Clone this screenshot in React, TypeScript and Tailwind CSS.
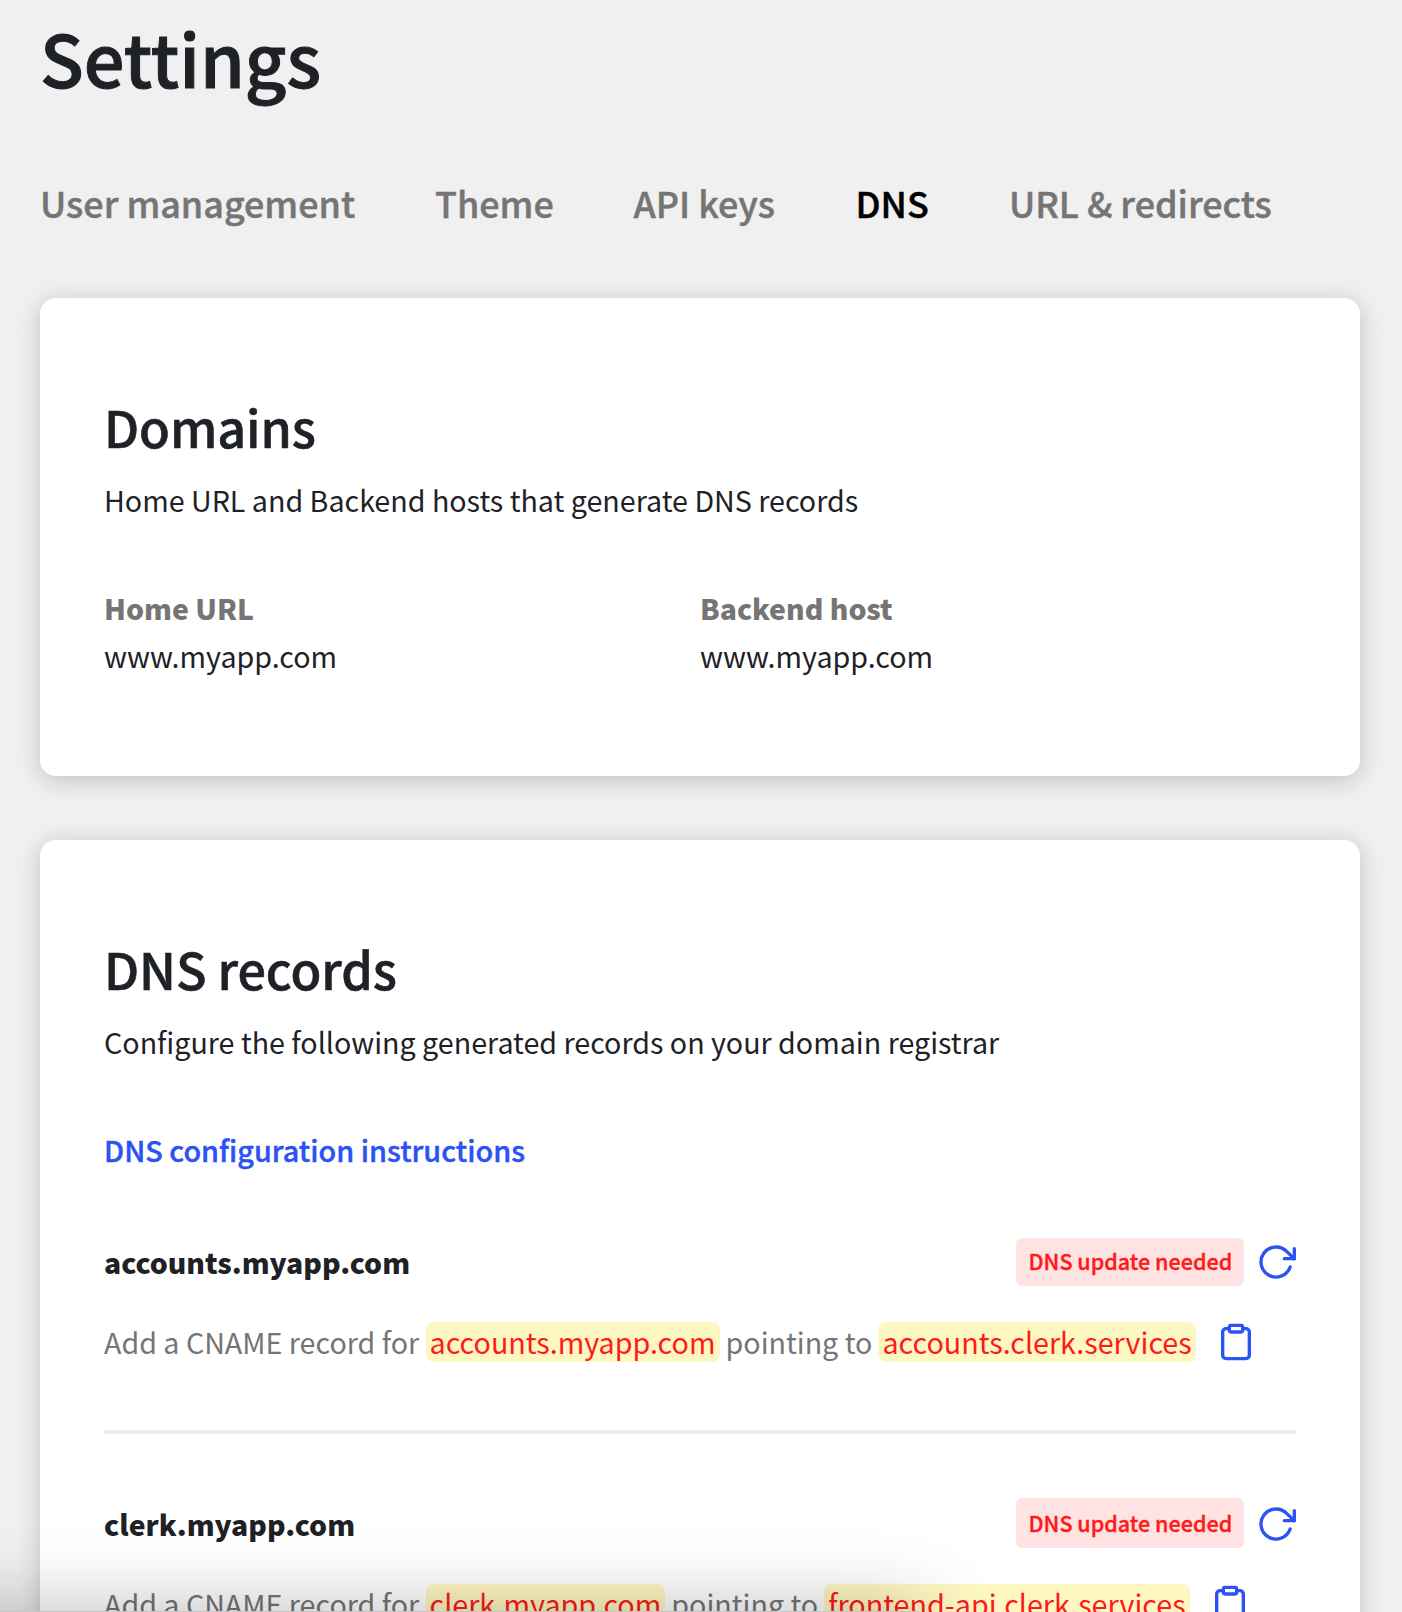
import type { ReactNode } from "react";

const tabs = [
  { label: "User management", width: "w-[395px]", active: false },
  { label: "Theme", width: "w-[198.5px]", active: false },
  { label: "API keys", width: "w-[222px]", active: false },
  { label: "DNS", width: "w-[153.5px]", active: true },
  { label: "URL & redirects", width: "w-[270px]", active: false },
];

function Card({ className, children }: { className?: string; children: ReactNode }) {
  return (
    <section
      className={`rounded-2xl bg-white px-16 pt-24 shadow-[0_4px_24px_rgba(0,0,0,0.2)] ${className ?? ""}`}
    >
      {children}
    </section>
  );
}

function CardHeader({ title, subtitle }: { title: string; subtitle: string }) {
  return (
    <header className="whitespace-nowrap">
      <h2 className="text-[50.3px] leading-[64px] font-medium tracking-[-0.1px] [-webkit-text-stroke:0.6px]">{title}</h2>
      <p className="mt-[21px] text-[28.65px] leading-[41px]">{subtitle}</p>
    </header>
  );
}

function Field({ label, value }: { label: string; value: string }) {
  return (
    <div>
      <dt className="text-[28.35px] leading-[41px] font-black text-[#757575]">{label}</dt>
      <dd className="mt-[7px] text-[28.65px] leading-[41px]">{value}</dd>
    </div>
  );
}

function RefreshIcon() {
  return (
    <svg
      className="mt-1 ml-3 size-10 shrink-0 text-[#2b52f2]"
      viewBox="0 0 24 24"
      fill="none"
      stroke="currentColor"
      strokeWidth="2"
      strokeLinecap="round"
      strokeLinejoin="round"
    >
      <path d="M23 4v6h-6" />
      <path d="M20.49 15a9 9 0 1 1-2.12-9.36L23 10" />
    </svg>
  );
}

function ClipboardIcon() {
  return (
    <svg
      className="mt-px ml-[14px] size-10 shrink-0 text-[#2b52f2]"
      viewBox="0 0 24 24"
      fill="none"
      stroke="currentColor"
      strokeWidth="2"
      strokeLinecap="round"
      strokeLinejoin="round"
    >
      <path d="M16 4h2a2 2 0 0 1 2 2v14a2 2 0 0 1-2 2H6a2 2 0 0 1-2-2V6a2 2 0 0 1 2-2h2" />
      <rect x="8" y="2" width="8" height="4" rx="1" ry="1" />
    </svg>
  );
}

function Highlight({ children }: { children: ReactNode }) {
  return (
    <mark className="mt-px h-10 rounded-lg bg-[#fff7c2] px-1 text-[28.7px] leading-[39px] text-[#ff1a1a]">{children}</mark>
  );
}

function DnsRecord({ host, target, tall }: { host: string; target: string; tall?: boolean }) {
  return (
    <div className="whitespace-nowrap">
      <div className="flex h-12 items-start">
        <h3 className="mt-[3px] flex-1 text-[28.35px] leading-[41px] font-black">{host}</h3>
        <span
          className={`w-[228px] rounded-md bg-[#ffe2e2] pl-[12.5px] text-[21.55px] leading-[31px] font-medium text-[#ff1a1a] [-webkit-text-stroke:0.35px] ${
            tall ? "-mt-0.5 h-[50px] pt-[9px]" : "h-12 pt-[7px]"
          }`}
        >
          DNS update needed
        </span>
        <RefreshIcon />
      </div>
      <p className="mt-[35px] flex items-start gap-1.5 text-[28.65px] leading-[41px] text-[#757575]">
        <span className="w-[315.5px]">Add a CNAME record for</span>
        <Highlight>{host}</Highlight>
        <span>pointing to</span>
        <Highlight>{target}</Highlight>
        <ClipboardIcon />
      </p>
    </div>
  );
}

export default function App() {
  return (
    <div className="relative h-[1612px] w-[1402px] overflow-hidden bg-[#f0f0f0] px-10 pr-[42px] pt-3 font-['Noto_Sans_CJK_JP',sans-serif] text-[#1e2126]">
      <h1 className="text-[72px] leading-[89px] font-medium [-webkit-text-stroke:1px]">Settings</h1>

      <nav className="mt-[77px] flex text-[35.9px] leading-[48px] font-medium whitespace-nowrap">
        {tabs.map((tab) => (
          <a
            key={tab.label}
            className={`${tab.width} [-webkit-text-stroke:0.45px] ${tab.active ? "text-black" : "text-[#757575]"}`}
          >
            {tab.label}
          </a>
        ))}
      </nav>

      <main className="mt-[72px] flex flex-col gap-16">
        <Card className="h-[478px]">
          <CardHeader title="Domains" subtitle="Home URL and Backend hosts that generate DNS records" />
          <dl className="mt-[67px] grid grid-cols-2">
            <Field label="Home URL" value="www.myapp.com" />
            <Field label="Backend host" value="www.myapp.com" />
          </dl>
        </Card>

        <Card className="h-[900px]">
          <CardHeader
            title="DNS records"
            subtitle="Configure the following generated records on your domain registrar"
          />
          <a className="mt-[67px] block text-[28.8px] leading-[41px] font-medium text-[#2b52f2] [-webkit-text-stroke:0.4px]">
            DNS configuration instructions
          </a>
          <div className="mt-[68px]">
            <DnsRecord host="accounts.myapp.com" target="accounts.clerk.services" />
            <hr className="mt-[68px] mb-[66px] border-t-4 border-[#f0f0f0]" />
            <DnsRecord host="clerk.myapp.com" target="frontend-api.clerk.services" tall />
          </div>
        </Card>
      </main>

      <div className="absolute top-[1611px] -left-40 h-40 w-[1085px] rounded-lg bg-[#c8c8c8] shadow-[0_0_80px_rgba(0,0,0,0.28)]" />
    </div>
  );
}
